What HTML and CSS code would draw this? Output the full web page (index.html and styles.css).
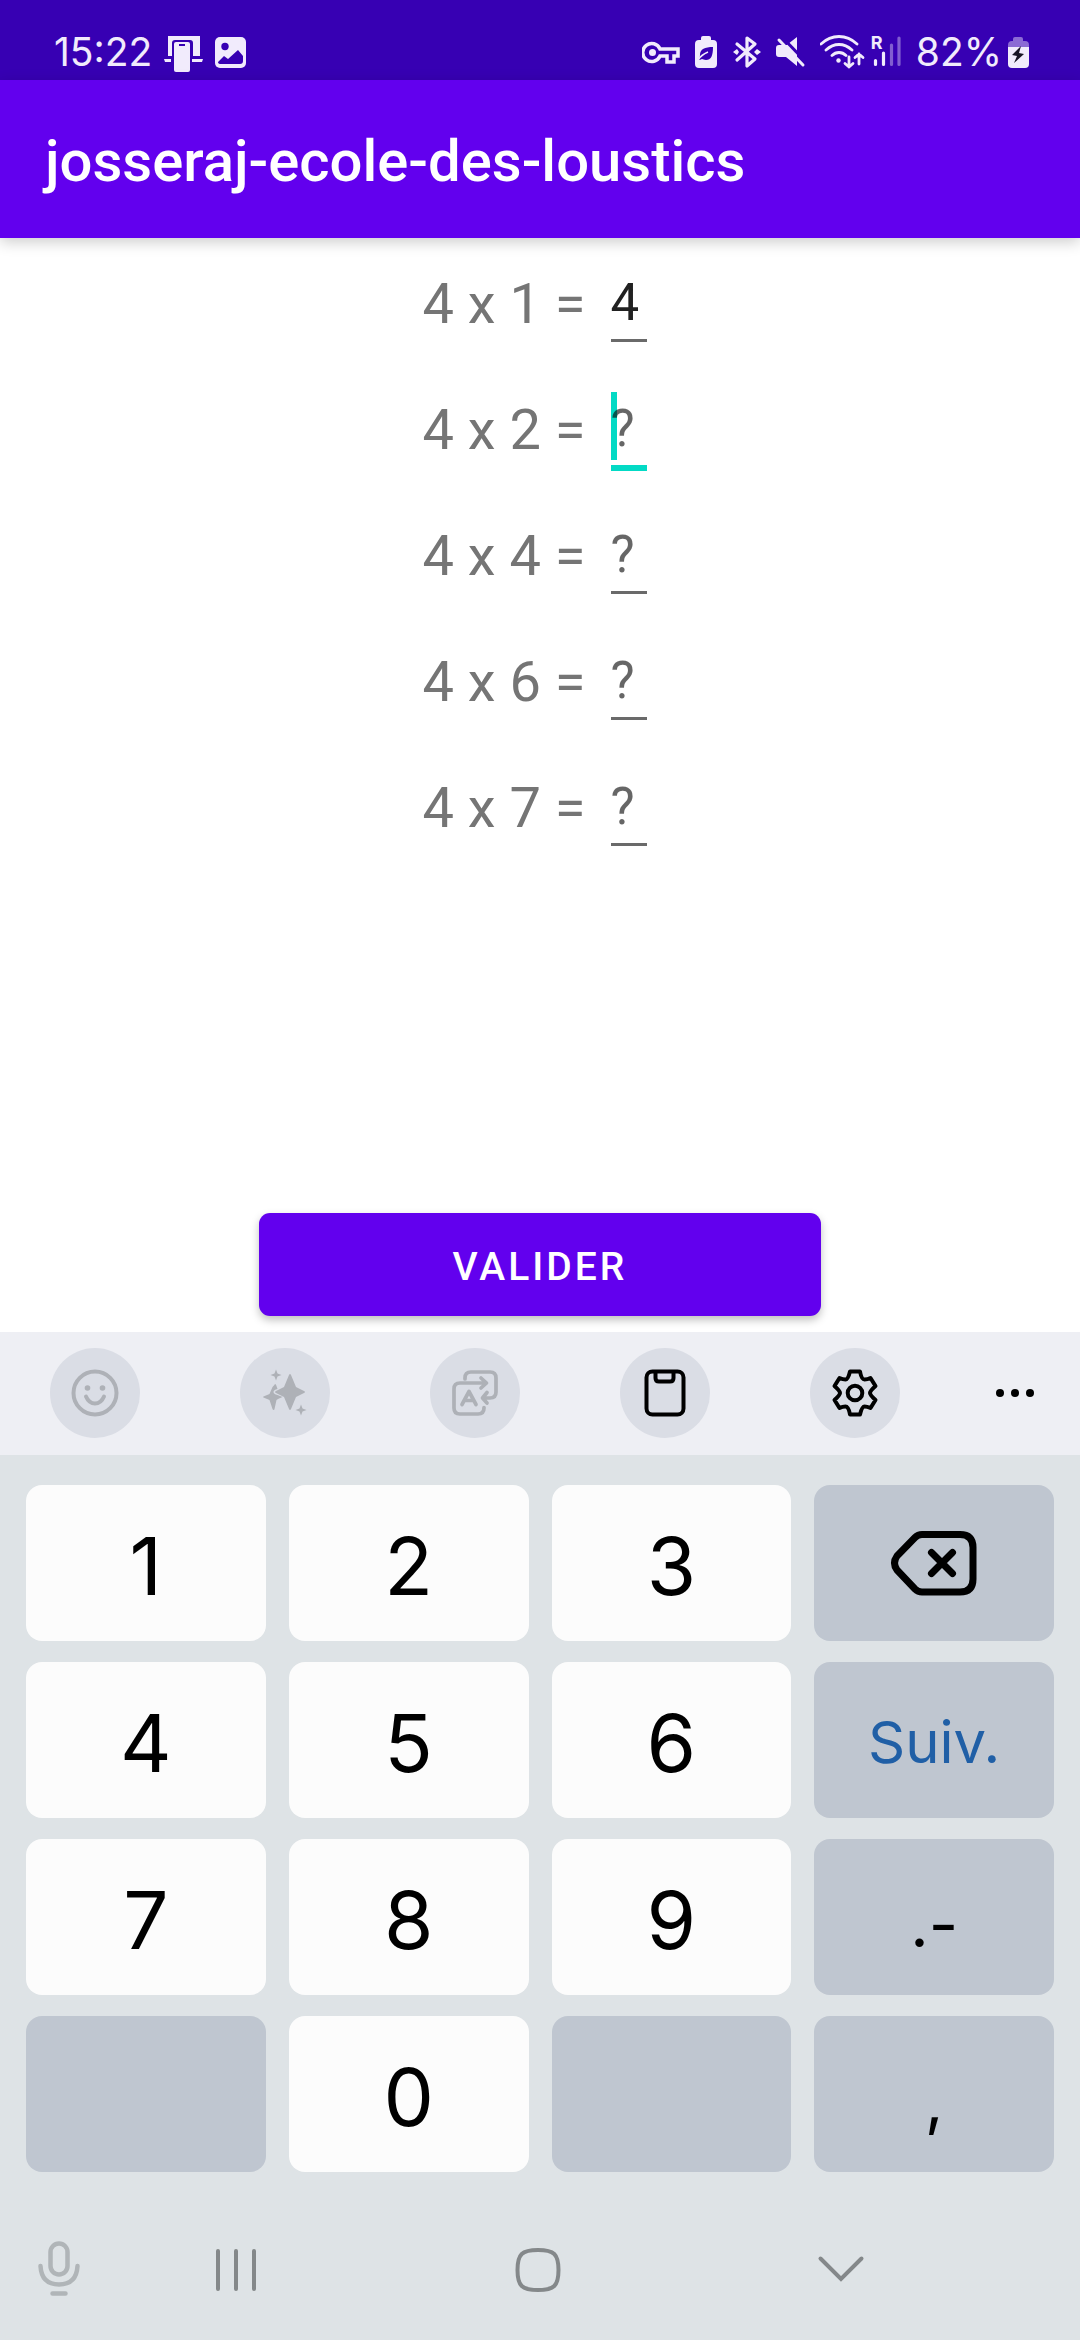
FILE: index.html
```html
<!DOCTYPE html>
<html lang="fr">
<head>
<meta charset="utf-8">
<meta name="viewport" content="width=device-width, initial-scale=1">
<title>josseraj-ecole-des-loustics</title>
<link rel="stylesheet" href="styles.css">
</head>
<body>
<div class="status">
  <div class="status-group">
    <span class="clock">15:22</span>
    <svg width="39" height="40" viewBox="164 32 39 40" aria-hidden="true">
      <path fill="currentColor" d="M168 36h32v20h-7V43q0-3-3-3h-15q-3 0-3 3v13h-4z"/>
      <path fill="currentColor" d="M164 59h7v3h-6zM192 59h11l-1 3h-10z"/>
      <rect x="174" y="42" width="16" height="30" rx="2" fill="currentColor"/>
      <path stroke="#3700b3" stroke-width="2" d="M179 45h6"/>
    </svg>
    <svg width="31" height="40" viewBox="215 32 31 40" aria-hidden="true">
      <rect x="215" y="37" width="31" height="31" rx="5" fill="currentColor"/>
      <circle cx="225" cy="46.500" r="3.700" fill="#3700b3"/>
      <path fill="#3700b3" d="M218 62l6-6 4 3 10-9 5 6v5q0 3-3 3h-19q-3 0-3-2z"/>
    </svg>
  </div>
  <div class="status-group status-icons">
    <svg width="39" height="40" viewBox="641 32 39 40" fill="none" stroke="currentColor" aria-hidden="true">
      <path stroke-width="3.500" d="M659 49a9 9 0 1 0 0 7h7v6h7v-6h4v-7z"/>
      <circle cx="651.500" cy="52.500" r="3.500" fill="currentColor" stroke="none"/>
    </svg>
    <svg width="23" height="40" viewBox="694 32 23 40" aria-hidden="true">
      <path fill="currentColor" d="M700 40v-2q0-2 2-2h6q2 0 2 2v2h2q4 0 4 4v20q0 4-4 4h-14q-4 0-4-4V44q0-4 4-4z"/>
      <path fill="#3700b3" d="M712 47c0 9-2 13-7 13-2 0-3-1-4-1q-2 1-3 1 1-2 1-5c0-6 5-8 13-8z"/>
      <path fill="none" stroke="currentColor" stroke-width="1.500" d="M697 60q3-5 10-8"/>
    </svg>
    <svg width="30" height="40" viewBox="731 32 30 40" fill="none" stroke="currentColor" aria-hidden="true">
      <path stroke-width="3.200" stroke-linecap="round" stroke-linejoin="round" d="M736 44l18 15-8 7V38l8 6-18 16"/>
      <path fill="currentColor" stroke="none" d="M732 52l4-3 2 3-2 3zM760 52l-4-3-3 3 3 3z"/>
    </svg>
    <svg width="30" height="40" viewBox="775 32 30 40" aria-hidden="true">
      <path fill="currentColor" d="M787 44l9-7v29l-11-9h-7q-3 0-3-3v-6q0-3 3-3h8z"/>
      <path stroke="#3700b3" stroke-width="3" d="M780 36l25 26"/>
      <path stroke="currentColor" stroke-width="3" stroke-linecap="round" d="M778 40l24 25"/>
    </svg>
    <div class="signal">
      <svg width="45" height="40" viewBox="819 32 45 40" fill="none" stroke="currentColor" stroke-width="2.800" stroke-linecap="round" aria-hidden="true">
        <path d="M820 44q8-7.500 18-7.500t18 7.500M825 50q6-5.500 13-5.500t13 5.500M831 55.500q3-3 7-3t7 3"/>
        <circle cx="837.500" cy="60.500" r="2.200" fill="currentColor" stroke="none"/>
        <path d="M848 57v10M844 63.500l4 3.500 4-3.500M858 64V54M854 57.500l4-3.500 4 3.500"/>
      </svg>
      <span class="network">
        <svg width="31" height="40" viewBox="870 32 31 40" fill="none" stroke="currentColor" stroke-width="3.200" stroke-linecap="round" aria-hidden="true">
          <path d="M874.500 60.500v4M882.500 53v11.500"/>
          <path opacity=".4" d="M890.500 45v19.500M898 38v26.500"/>
        </svg>
        <span class="roaming">R</span>
      </span>
    </div>
    <div class="charge">
      <span class="percent">82%</span>
      <svg width="22" height="40" viewBox="1005 32 22 40" aria-hidden="true">
        <path fill="currentColor" opacity=".45" d="M1010 41v-2q0-2 2-2h6q2 0 2 2v2h2q4 0 4 4v2h-21v-2q0-4 4-4z"/>
        <path fill="currentColor" d="M1005 47h21v17q0 4-4 4h-13q-4 0-4-4z"/>
        <path fill="#181425" d="M1018 46l-9 9 5 1-3 7 10-9-5-1z"/>
      </svg>
    </div>
  </div>
</div>

<header class="appbar"><h1 class="title">josseraj-ecole-des-loustics</h1></header>

<main class="exercise">
  <form class="form">
    <div class="rows">
      <div class="row">
        <label class="question" for="a1">4 x 1 =</label>
        <span class="field"><input class="answer" id="a1" type="text" inputmode="numeric" placeholder="?" value="4"></span>
      </div>
      <div class="row">
        <label class="question" for="a2">4 x 2 =</label>
        <span class="field"><span class="caret"></span><input class="answer answer-active" id="a2" type="text" inputmode="numeric" placeholder="?"></span>
      </div>
      <div class="row">
        <label class="question" for="a3">4 x 4 =</label>
        <span class="field"><input class="answer" id="a3" type="text" inputmode="numeric" placeholder="?"></span>
      </div>
      <div class="row">
        <label class="question" for="a4">4 x 6 =</label>
        <span class="field"><input class="answer" id="a4" type="text" inputmode="numeric" placeholder="?"></span>
      </div>
      <div class="row">
        <label class="question" for="a5">4 x 7 =</label>
        <span class="field"><input class="answer" id="a5" type="text" inputmode="numeric" placeholder="?"></span>
      </div>
    </div>
    <button class="submit" type="button">VALIDER</button>
  </form>
</main>

<section class="keyboard" aria-label="Clavier">
  <div class="tools">
    <button class="tool" type="button" disabled aria-label="Emoji">
      <svg width="48" height="48" viewBox="-24 -24 48 48" fill="none" stroke="currentColor" stroke-width="4" stroke-linecap="round">
        <circle r="21.500"/><path d="M-9 3.500q3 7 9 7t9-7"/>
        <circle cx="-7.500" cy="-5" r="2.800" fill="currentColor" stroke="none"/><circle cx="7.500" cy="-5" r="2.800" fill="currentColor" stroke="none"/>
      </svg>
    </button>
    <button class="tool" type="button" disabled aria-label="Assistant">
      <svg width="48" height="48" viewBox="-24 -24 48 48" fill="currentColor">
        <path d="M-10-9q1 0 1.500 2l1 3q-4 1-4 3t4 3l5 2q-5 2-6 3l-2 9q0 1-1 1-.500 0-1-1l-3-9-6-2.500q-1-.500 0-1l6-2.500 3-7q2-2 2.500-3z"/>
        <path d="M4-18q1-2 2 0l5 12 8 4q2 1 0 2l-8 4-5 12q-1 2-2 0L-1 4l-8-4q-2-1 0-2l8-4z"/>
        <path d="M-9-23.500l1.500 4 4 1.500-4 1.500-1.500 4-1.500-4-4-1.500 4-1.500zM16 11.500l1.500 4 4 1.500-4 1.500-1.500 4-1.500-4-4-1.500 4-1.500z"/>
      </svg>
    </button>
    <button class="tool" type="button" disabled aria-label="Traduire">
      <svg width="48" height="48" viewBox="-24 -24 48 48" fill="none" stroke="currentColor" stroke-width="3.700" stroke-linecap="round" stroke-linejoin="round">
        <path d="M-10-14v-1q0-6 6-6h19q6 0 6 6V-1q0 6-6 6H8M12-.500L7.500 5 12 10"/>
        <path d="M11-10h-26q-6 0-6 6v19q0 6 6 6H3q6 0 6-6v-.500M6-15l5.500 5L6-5"/>
        <path d="M-13 11.500l7-13 7 13M-10 7.500h8"/>
      </svg>
    </button>
    <button class="tool" type="button" aria-label="Presse-papiers">
      <svg width="48" height="48" viewBox="-24 -24 48 48" fill="none" stroke="currentColor" stroke-width="4">
        <rect x="-18.500" y="-21.500" width="37" height="43" rx="6"/><path d="M-9.500-21v6q0 3.500 3.500 3.500H5q3.500 0 3.500-3.500v-6"/>
      </svg>
    </button>
    <button class="tool" type="button" aria-label="Paramètres">
      <svg width="48" height="48" viewBox="-24 -24 48 48" fill="none" stroke="currentColor" stroke-width="4" stroke-linejoin="round">
        <path d="M-5-21.500H5Q6.500-13.500 9.500-13.500T15.500-15L20.500-7Q15-2 15 0T20.500 7L15.500 15Q12 13.500 9.500 13.500T5 21.500H-5Q-6.500 13.500-9.500 13.500T-15.500 15L-20.500 7Q-15 2-15 0T-20.500-7L-15.500-15Q-12-13.500-9.500-13.500T-5-21.500z"/>
        <circle r="7.300"/>
      </svg>
    </button>
    <button class="tool tool-more" type="button" aria-label="Plus">
      <svg width="48" height="48" viewBox="-24 -24 48 48" fill="currentColor"><circle cx="-15" r="4"/><circle r="4"/><circle cx="15" r="4"/></svg>
    </button>
  </div>

  <div class="keys">
    <button class="key" type="button">1</button>
    <button class="key" type="button">2</button>
    <button class="key" type="button">3</button>
    <button class="key key-side" type="button" aria-label="Effacer">
      <svg width="90" height="70" viewBox="-45 -35 90 70" fill="none" stroke="currentColor" stroke-width="7" stroke-linecap="round" stroke-linejoin="round">
        <path d="M-12-28.500H26Q39-28.500 39-15.500V16Q39 29 26 29H-12q-4 0-7-3L-37 7q-5-7 0-14l18-18.500q3-3 7-3z"/>
        <path d="M-2.500-10.500l21 21M18.500-10.500l-21 21"/>
      </svg>
    </button>
    <button class="key" type="button">4</button>
    <button class="key" type="button">5</button>
    <button class="key" type="button">6</button>
    <button class="key key-side key-next" type="button">Suiv.</button>
    <button class="key" type="button">7</button>
    <button class="key" type="button">8</button>
    <button class="key" type="button">9</button>
    <button class="key key-side key-sign" type="button">.-</button>
    <button class="key key-side" type="button" disabled aria-label="Vide"></button>
    <button class="key" type="button">0</button>
    <button class="key key-side" type="button" disabled aria-label="Vide"></button>
    <button class="key key-side key-sign" type="button">,</button>
  </div>

  <nav class="nav">
    <button class="nav-button nav-mic" type="button" aria-label="Saisie vocale">
      <svg width="48" height="60" viewBox="-24 -27 48 60" fill="none" stroke="currentColor" stroke-width="4.500" stroke-linecap="round">
        <rect x="-8.500" y="-23.500" width="17" height="31" rx="8.500"/><path d="M-18.500-1q1 18.500 18.500 18.500T18.500-1M-6.500 26.500h13"/>
      </svg>
    </button>
    <button class="nav-button" type="button" aria-label="Applications récentes">
      <svg width="48" height="48" viewBox="-24 -24 48 48" fill="none" stroke="currentColor" stroke-width="4" stroke-linecap="round"><path d="M-18-19v38M0-19v38M18-19v38"/></svg>
    </button>
    <button class="nav-button" type="button" aria-label="Accueil">
      <svg width="48" height="48" viewBox="-24 -24 48 48" fill="none" stroke="currentColor" stroke-width="4"><path d="M0-20C16-20 20.500-16 20.500 0S16 20 0 20-20.500 16-20.500 0-16-20 0-20z"/></svg>
    </button>
    <button class="nav-button" type="button" aria-label="Masquer le clavier">
      <svg width="48" height="48" viewBox="-24 -24 48 48" fill="none" stroke="currentColor" stroke-width="4" stroke-linecap="round"><path d="M-20.500-11.500L0 9 20.500-11.500"/></svg>
    </button>
  </nav>
</section>
</body>
</html>
```
FILE: styles.css
```css
* {
  box-sizing: border-box;
}

body {
  display: flex;
  flex-direction: column;
  min-height: 100vh;
  margin: 0;
  background: #fff;
  font-family: Roboto, sans-serif;
}

button {
  margin: 0;
  padding: 0;
  border: 0;
  background: none;
  color: inherit;
  font: inherit;
}

svg {
  display: block;
  flex: none;
}

/* System status bar */
.status {
  display: flex;
  align-items: center;
  justify-content: space-between;
  height: 80px;
  padding: 24px 50px 0 54px;
  background: #3700b3;
  color: #f1ebfc;
  font-family: Inter, sans-serif;
  font-size: 39px;
  line-height: 40px;
}

.status-group {
  display: flex;
  align-items: center;
  gap: 12px;
}

.status-icons {
  gap: 14px;
}

.signal,
.charge {
  display: flex;
  align-items: center;
  gap: 6px;
}

.network {
  position: relative;
}

.roaming {
  position: absolute;
  top: 1px;
  left: 0;
  font-size: 18px;
  font-weight: 700;
  line-height: 20px;
}

/* Application bar */
.appbar {
  position: relative;
  padding: 48px 45px 44px;
  background: #6200ee;
  box-shadow: 0 4px 14px rgba(0, 0, 0, 0.2);
}

.title {
  margin: 0;
  color: #fff;
  font-size: 58px;
  font-weight: 500;
  line-height: 66px;
}

/* Multiplication table */
.exercise,
.form {
  display: flex;
  flex: 1;
  flex-direction: column;
}

.form {
  align-items: center;
  justify-content: space-between;
  padding: 28px 0 16px;
}

.rows {
  display: grid;
  gap: 50px;
}

.row {
  display: flex;
  height: 76px;
}

.question {
  color: #757575;
  font-size: 56px;
  line-height: 76px;
}

.field {
  position: relative;
  width: 36px;
  margin: 0 11px 0 25px;
}

.answer {
  position: relative;
  display: block;
  box-sizing: content-box;
  width: 100%;
  height: 73px;
  padding: 0;
  border: 0;
  border-bottom: 3px solid #6a6a6a;
  border-radius: 0;
  outline: 0;
  background: transparent;
  color: #212121;
  font-family: inherit;
  font-size: 51px;
}

.answer::placeholder {
  color: rgba(0, 0, 0, 0.6);
  opacity: 1;
}

.answer-active {
  border-bottom: 6px solid #03dac5;
}

.caret {
  position: absolute;
  top: 0;
  left: 0;
  width: 6px;
  height: 68px;
  background: #03dac5;
}

.submit {
  width: 52%;
  height: 103px;
  padding-top: 4px;
  border-radius: 11px;
  background: #6200ee;
  box-shadow: 0 4px 8px rgba(0, 0, 0, 0.25);
  color: #fff;
  font-size: 39px;
  font-weight: 500;
  letter-spacing: 3px;
}

/* On-screen keyboard */
.keyboard {
  background: #dee3e6;
  font-family: Inter, sans-serif;
}

.tools {
  display: grid;
  grid-template-columns: repeat(5, 19fr) 13fr;
  align-items: center;
  justify-items: center;
  padding: 16px 0 17px;
  background: #eeeff4;
}

.tool {
  display: flex;
  align-items: center;
  justify-content: center;
  width: 90px;
  height: 90px;
  border-radius: 50%;
  background: #dadde5;
  color: #000;
}

.tool:disabled {
  color: #aeb1b7;
}

.tool-more {
  background: none;
}

.keys {
  display: grid;
  grid-template-columns: repeat(4, 1fr);
  grid-auto-rows: 156px;
  gap: 21px 23px;
  padding: 30px 26px 0;
}

.key {
  display: flex;
  align-items: center;
  justify-content: center;
  padding-top: 4px;
  border-radius: 16px;
  background: #fcfcfc;
  color: #000;
  font-size: 80px;
}

.key-side {
  padding-top: 0;
  background: #bfc6d0;
}

.key-next {
  padding-top: 4px;
  color: #205fa6;
  font-size: 58px;
}

.key-sign {
  padding-top: 12px;
  font-size: 64px;
}

/* System navigation */
.nav {
  display: grid;
  grid-template-columns: 118fr 236fr 368fr 238fr 120fr;
  align-items: center;
  justify-items: center;
  height: 168px;
  padding-top: 28px;
  color: #84888a;
}

.nav-mic {
  color: #b0b5b8;
}
```
